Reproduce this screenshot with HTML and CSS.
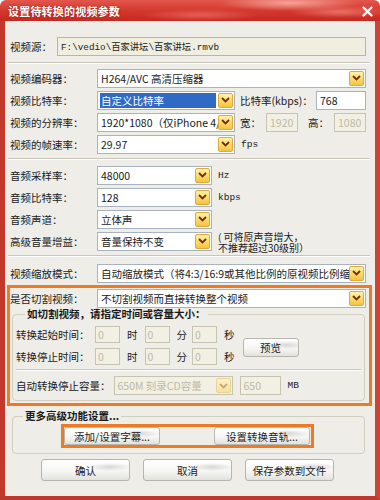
FILE: index.html
```html
<!DOCTYPE html>
<html>
<head>
<meta charset="utf-8">
<link rel="stylesheet" href="styles.css">
</head>
<body>
<div class="window">
  <div class="titlebar">
    <span class="title">设置待转换的视频参数</span>
    <svg class="close" width="11" height="11" viewBox="0 0 11 11"><path d="M1.5 1.5L9.5 9.5M9.5 1.5L1.5 9.5" stroke="#fff" stroke-width="2.4" stroke-linecap="round"/></svg>
  </div>
  <div class="body">
    <div class="row r-src">
      <span class="lbl lbl-src">视频源：</span>
      <div class="field path">F:\vedio\百家讲坛\百家讲坛.rmvb</div>
    </div>
    <div class="sep"></div>

    <div class="group g-video">
      <div class="row">
        <span class="lbl">视频编码器：</span>
        <div class="select w-full"><span class="val">H264/AVC 高清压缩器</span><span class="arr"><svg width="9" height="6" viewBox="0 0 9 6"><path d="M1 1L4.5 4.5L8 1" fill="none" stroke="#7a2a10" stroke-width="1.8"/></svg></span></div>
      </div>
      <div class="row">
        <span class="lbl">视频比特率：</span>
        <div class="select w-mid"><span class="val sel">自定义比特率</span><span class="arr"><svg width="9" height="6" viewBox="0 0 9 6"><path d="M1 1L4.5 4.5L8 1" fill="none" stroke="#7a2a10" stroke-width="1.8"/></svg></span></div>
        <span class="side">比特率(kbps)：</span>
        <div class="field in-768">768</div>
      </div>
      <div class="row">
        <span class="lbl">视频的分辨率：</span>
        <div class="select w-mid"><span class="val">1920*1080（仅iPhone 4/3</span><span class="arr"><svg width="9" height="6" viewBox="0 0 9 6"><path d="M1 1L4.5 4.5L8 1" fill="none" stroke="#7a2a10" stroke-width="1.8"/></svg></span></div>
        <span class="side">宽：</span>
        <div class="field dis in-wh">1920</div>
        <span class="side gap-h">高：</span>
        <div class="field dis in-wh push">1080</div>
      </div>
      <div class="row">
        <span class="lbl">视频的帧速率：</span>
        <div class="select w-mid"><span class="val">29.97</span><span class="arr"><svg width="9" height="6" viewBox="0 0 9 6"><path d="M1 1L4.5 4.5L8 1" fill="none" stroke="#7a2a10" stroke-width="1.8"/></svg></span></div>
        <span class="side unit">fps</span>
      </div>
    </div>
    <div class="sep"></div>

    <div class="group g-audio">
      <div class="row">
        <span class="lbl">音频采样率：</span>
        <div class="select w-short"><span class="val">48000</span><span class="arr"><svg width="9" height="6" viewBox="0 0 9 6"><path d="M1 1L4.5 4.5L8 1" fill="none" stroke="#7a2a10" stroke-width="1.8"/></svg></span></div>
        <span class="side unit">Hz</span>
      </div>
      <div class="row">
        <span class="lbl">音频比特率：</span>
        <div class="select w-short"><span class="val">128</span><span class="arr"><svg width="9" height="6" viewBox="0 0 9 6"><path d="M1 1L4.5 4.5L8 1" fill="none" stroke="#7a2a10" stroke-width="1.8"/></svg></span></div>
        <span class="side unit">kbps</span>
      </div>
      <div class="row">
        <span class="lbl">音频声道：</span>
        <div class="select w-short"><span class="val">立体声</span><span class="arr"><svg width="9" height="6" viewBox="0 0 9 6"><path d="M1 1L4.5 4.5L8 1" fill="none" stroke="#7a2a10" stroke-width="1.8"/></svg></span></div>
      </div>
      <div class="row">
        <span class="lbl">高级音量增益：</span>
        <div class="select w-short"><span class="val">音量保持不变</span><span class="arr"><svg width="9" height="6" viewBox="0 0 9 6"><path d="M1 1L4.5 4.5L8 1" fill="none" stroke="#7a2a10" stroke-width="1.8"/></svg></span></div>
        <span class="side note">(&nbsp;可将原声音增大，<br>不推荐超过30级别）</span>
      </div>
    </div>
    <div class="sep"></div>

    <div class="row r-scale">
      <span class="lbl">视频缩放模式：</span>
      <div class="select w-full"><span class="val">自动缩放模式（将4:3/16:9或其他比例的原视频比例缩放</span><span class="arr"><svg width="9" height="6" viewBox="0 0 9 6"><path d="M1 1L4.5 4.5L8 1" fill="none" stroke="#7a2a10" stroke-width="1.8"/></svg></span></div>
    </div>

    <div class="hl hl-cut">
      <div class="row">
        <span class="lbl">是否切割视频：</span>
        <div class="select w-full"><span class="val">不切割视频而直接转换整个视频</span><span class="arr"><svg width="9" height="6" viewBox="0 0 9 6"><path d="M1 1L4.5 4.5L8 1" fill="none" stroke="#7a2a10" stroke-width="1.8"/></svg></span></div>
      </div>
      <fieldset class="box box-cut">
        <legend class="legend lg-cut">如切割视频，请指定时间或容量大小：</legend>
        <div class="time-area">
          <div class="times">
            <div class="trow">
              <span class="tlbl">转换起始时间：</span>
              <div class="field dis tin">0</div><span class="tu">时</span>
              <div class="field dis tin">0</div><span class="tu">分</span>
              <div class="field dis tin t3">0</div><span class="tu">秒</span>
            </div>
            <div class="trow">
              <span class="tlbl">转换停止时间：</span>
              <div class="field dis tin">0</div><span class="tu">时</span>
              <div class="field dis tin">0</div><span class="tu">分</span>
              <div class="field dis tin t3">0</div><span class="tu">秒</span>
            </div>
          </div>
          <div class="btn btn-prev">预览</div>
        </div>
        <div class="sep sep-in"></div>
        <div class="trow cap-row">
          <span class="tlbl cap-lbl">自动转换停止容量：</span>
          <div class="select dis-sel w-cap"><span class="val">650M 刻录CD容量</span><span class="arr arr-dis"><svg width="9" height="6" viewBox="0 0 9 6"><path d="M1 1L4.5 4.5L8 1" fill="none" stroke="#c8a870" stroke-width="1.8"/></svg></span></div>
          <div class="field dis in-650">650</div>
          <span class="side unit mb">MB</span>
        </div>
      </fieldset>
    </div>

    <fieldset class="box box-more">
      <legend class="legend lg-more">更多高级功能设置...</legend>
      <div class="hl hl-btns">
        <div class="btn btn-sm">添加/设置字幕...</div>
        <div class="btn btn-sm">设置转换音轨...</div>
      </div>
    </fieldset>

    <div class="actions">
      <div class="btn btn-act">确认</div>
      <div class="btn btn-act">取消</div>
      <div class="btn btn-act">保存参数到文件</div>
    </div>
  </div>
</div>
</body>
</html>
```
FILE: styles.css
```css
* { box-sizing: border-box; }
html, body { margin: 0; padding: 0; background: #fff; }
body {
  font-family: "Noto Sans CJK SC", "Noto Sans", sans-serif;
  font-size: 10.5px;
  color: #1a1a1a;
}
.window {
  width: 380px;
  height: 500px;
  display: flex;
  flex-direction: column;
}
.titlebar {
  height: 21px;
  flex: none;
  display: flex;
  align-items: center;
  padding: 0 8px 0 8px;
  border-radius: 6px 6px 0 0;
  background:
    radial-gradient(ellipse 70px 8px at 290px 3px, rgba(255,190,180,0.75), rgba(255,190,180,0) 100%),
    radial-gradient(ellipse 60px 6px at 200px 15px, rgba(255,150,140,0.45), rgba(255,150,140,0) 100%),
    radial-gradient(ellipse 50px 6px at 340px 12px, rgba(255,170,160,0.5), rgba(255,170,160,0) 100%),
    linear-gradient(#e2574c, #d3362c 55%, #c42a22);
}
.title {
  color: #fff;
  font-weight: bold;
  font-size: 11px;
  letter-spacing: 0.2px;
  text-shadow: 0 0 2px #8a1a12;
}
.close { margin-left: auto; margin-right: -1px; margin-top: 2px; }
.body {
  flex: 1;
  background: #eeede8;
  border-left: 5px solid #c2392c;
  border-right: 5px solid #cf4333;
  border-bottom: 4px solid #c0382b;
  padding: 0 9px 0 5px;
  display: flex;
  flex-direction: column;
}
.row {
  display: flex;
  align-items: center;
  height: 20px;
  flex: none;
}
.lbl { width: 87px; flex: none; white-space: nowrap; }
.lbl-src { width: 47px; }
.r-src { margin-top: 15px; }
.field {
  height: 19px;
  border: 1px solid #a9b3be;
  background: #fff;
  display: flex;
  align-items: center;
  padding-left: 3px;
  white-space: nowrap;
  overflow: hidden;
  flex: none;
}
.path {
  flex: 1;
  background: #efeedf;
  border-color: #b9b59f;
  font-family: "Liberation Mono", "Noto Sans CJK SC", monospace;
  font-size: 9.3px;
  color: #222;
}
.dis {
  background: #f2f0e2;
  border-color: #c6c3b0;
  color: #bdbaa8;
}
.sep {
  flex: none;
  height: 2px;
  border-top: 1px solid #c8c6b8;
  border-bottom: 1px solid #fff;
  margin: 6px -4px 0 -2px;
}
.group { display: flex; flex-direction: column; gap: 2px; }
.g-video { margin-top: 4px; }
.g-video + .sep { margin-top: 4px; }
.g-audio { margin-top: 5px; }
.g-audio + .sep { margin-top: 4px; }
.r-scale { margin-top: 6px; }
.select {
  height: 19px;
  border: 1px solid #a9b3be;
  background: #fff;
  display: flex;
  align-items: center;
  padding: 0 1px 0 2px;
  flex: none;
  overflow: hidden;
}
.w-full { flex: 1; }
.w-mid { width: 138px; }
.w-short { width: 115px; }
.w-cap { width: 119px; margin-left: 3px; }
.val {
  flex: 1;
  white-space: nowrap;
  overflow: hidden;
  padding-left: 1px;
  line-height: 15px;
  height: 15px;
}
.val.sel { background: #316ac5; color: #fff; margin-right: 2px; }
.arr {
  flex: none;
  width: 15px;
  height: 15px;
  border: 1px solid #e2a83a;
  border-radius: 2px;
  background: linear-gradient(#fff3b0, #fbdc6a 50%, #f3c444);
  display: flex;
  align-items: center;
  justify-content: center;
}
.arr-dis {
  border-color: #ecd290;
  background: linear-gradient(#fbf1cc, #f4e1a0);
}
.dis-sel { background: #f2f0e2; border-color: #c6c3b0; color: #bdbaa8; }
.side { margin-left: 5px; white-space: nowrap; flex: none; }
.unit { font-family: "Liberation Mono", "DejaVu Sans Mono", monospace; font-size: 9.5px; margin-left: 6px; }
.in-768 { width: 50px; margin-left: auto; color: #222; }
.in-wh { width: 32px; margin-left: 5px; }
.gap-h { margin-left: 10px; }
.push { margin-left: auto; }
.note { font-size: 10px; line-height: 11px; margin-left: 6px; margin-top: 1px; }

.hl {
  border: 3px solid #f07a24;
}
.hl-cut {
  margin: 2px -6px 0 -3px;
  padding: 0 3px 2px 0;
  flex: none;
}
.box {
  margin: 0;
  padding: 0;
  border: 1px solid #d0cebf;
  border-radius: 4px;
  min-inline-size: 0;
}
.legend {
  font-weight: bold;
  line-height: 12px;
  padding: 0 2px;
  white-space: nowrap;
}
.box-cut { margin: 0 1px 0 2px; padding: 0 3px 5px 3px; }
.lg-cut { margin-left: 9px; }
.time-area { display: flex; align-items: center; padding-top: 5px; }
.times { display: flex; flex-direction: column; gap: 4px; }
.trow { display: flex; align-items: center; height: 18px; }
.tlbl { width: 79px; flex: none; white-space: nowrap; }
.tin { width: 25px; height: 17px; padding-left: 2px; }
.tu { margin: 0 7px; flex: none; }
.tin.t3 { margin-left: -2px; }
.btn {
  display: flex;
  align-items: center;
  justify-content: center;
  border: 1px solid #b6b6ae;
  border-radius: 3px;
  background:
    radial-gradient(ellipse 22px 4px at 78% 35%, rgba(150,150,150,0.35), rgba(150,150,150,0) 100%),
    linear-gradient(#ffffff, #f6f6f3 55%, #e2e2dd);
  color: #222;
  white-space: nowrap;
  flex: none;
}
.btn-prev { width: 56px; height: 19px; margin-left: 1px; margin-top: 4px; }
.sep-in { margin: 4px 0 0 0; }
.cap-row { margin-top: 5px; height: 19px; }
.cap-lbl { width: auto; }
.in-650 { width: 41px; margin-left: 7px; height: 19px; }
.mb { margin-left: 7px; }

.box-more { margin: 4px 1px 0 2px; padding: 2px 0 5px 0; flex: none; }
.lg-more { margin-left: 10px; font-weight: bold; }
.hl-btns {
  width: 253px;
  margin-left: 48px;
  display: flex;
  justify-content: space-between;
  padding-right: 1px;
}
.btn-sm { width: 96px; height: 18px; }
.actions {
  display: flex;
  justify-content: center;
  gap: 13px;
  margin-top: 5px;
  padding-right: 1px;
}
.btn-act { width: 89px; height: 22px; }
```
